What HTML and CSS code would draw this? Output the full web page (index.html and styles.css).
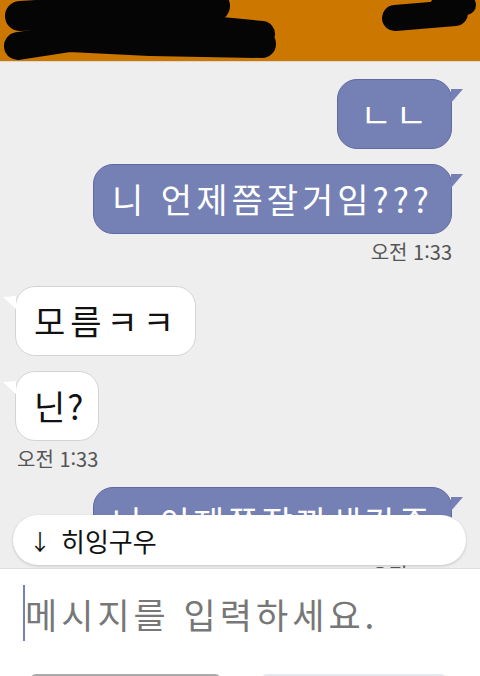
FILE: index.html
```html
<!DOCTYPE html>
<html lang="ko">
<head>
    <meta charset="UTF-8">
    <meta name="viewport" content="width=device-width, initial-scale=1.0">
    <title>채팅</title>
    <link rel="stylesheet" href="styles.css">
</head>
<body>
    <!-- Top bar (name scribbled out) -->
    <header class="top-bar">
        <svg class="scribble" width="480" height="62" viewBox="0 0 480 62">
            <g fill="none" stroke="#050505" stroke-linecap="round" stroke-linejoin="round">
                <path d="M20 16 L120 10 L215 6" stroke-width="30"/>
                <path d="M18 46 L70 38 L150 42 L262 44" stroke-width="28"/>
                <path d="M90 30 L200 28 L262 34" stroke-width="26"/>
                <path d="M395 18 L455 13" stroke-width="26"/>
                <path d="M440 6 L466 5" stroke-width="20"/>
            </g>
        </svg>
    </header>

    <main class="chat">
        <div class="messages">
            <div class="row mine">
                <div class="bubble mine-bubble jamo">ㄴㄴ</div>
            </div>
            <div class="row mine">
                <div class="bubble mine-bubble wide">니 언제쯤잘거임???</div>
            </div>
            <div class="time time-right">오전 1:33</div>

            <div class="row theirs">
                <div class="bubble their-bubble">모름ㅋㅋ</div>
            </div>
            <div class="row theirs">
                <div class="bubble their-bubble short">닌?</div>
            </div>
            <div class="time time-left">오전 1:33</div>

            <div class="row mine">
                <div class="bubble mine-bubble">나 이제쯤잘까생각중</div>
            </div>
            <div class="time time-right">오전 1:33</div>
        </div>

        <!-- new message preview -->
        <div class="preview">
            <span class="arrow">↓</span>
            <span>히잉구우</span>
        </div>
    </main>

    <footer class="composer">
        <div class="input-line">
            <span class="caret"></span>
            <span class="placeholder">메시지를 입력하세요.</span>
        </div>
        <div class="buttons">
            <div class="btn btn-left"></div>
            <div class="btn btn-right"></div>
        </div>
    </footer>
</body>
</html>
```

FILE: styles.css
```css
/* General reset */
* {
    margin: 0;
    padding: 0;
    box-sizing: border-box;
}

body {
    font-family: 'Noto Sans CJK KR', 'Noto Sans', sans-serif;
    background-color: #eeeeee;
    width: 480px;
    height: 676px;
    display: flex;
    flex-direction: column;
    overflow: hidden;
}

/* Header */
.top-bar {
    height: 62px;
    flex-shrink: 0;
    background-color: #cc7800;
    border-bottom: 1px solid #d8d8d8;
}

.scribble {
    display: block;
}

/* Chat area */
.chat {
    position: relative;
    flex: 1;
    overflow: hidden;
}

.messages {
    display: flex;
    flex-direction: column;
    padding: 17px 28px 0 15px;
}

.row {
    display: flex;
    margin-bottom: 15px;
}

.row.mine {
    justify-content: flex-end;
}

.row.theirs {
    justify-content: flex-start;
}

.bubble {
    position: relative;
    height: 70px;
    padding: 0 18px;
    border-radius: 20px;
    font-size: 34px;
    line-height: 68px;
    letter-spacing: 3px;
    white-space: nowrap;
}

.mine-bubble {
    background-color: #7581b5;
    border: 1px solid #5f6aa3;
    color: #ffffff;
}

.mine-bubble::after {
    content: "";
    position: absolute;
    top: 9px;
    right: -12px;
    width: 12px;
    height: 14px;
    background-color: #7581b5;
    clip-path: polygon(0 0, 100% 0, 0 100%);
}

.wide {
    letter-spacing: 4px;
    padding: 0 18px 0 18px;
}

.jamo {
    padding: 0 20px 0 22px;
    letter-spacing: 4px;
}

.their-bubble {
    background-color: #ffffff;
    border: 1px solid #d4d4d4;
    color: #111111;
    padding: 0 16px 0 18px;
    letter-spacing: 5px;
}

.their-bubble.short {
    padding: 0 13px 0 18px;
    letter-spacing: 2px;
}

.their-bubble::after {
    content: "";
    position: absolute;
    top: 9px;
    left: -13px;
    width: 13px;
    height: 13px;
    background-color: #ffffff;
    clip-path: polygon(0 8%, 100% 0, 100% 100%);
}

.time {
    font-size: 20px;
    color: #555555;
    line-height: 24px;
    margin-top: -9px;
    margin-bottom: 22px;
}

.time-right {
    align-self: flex-end;
}

.time-left {
    align-self: flex-start;
    margin-left: 2px;
    margin-bottom: 16px;
}

/* New message preview */
.preview {
    position: absolute;
    left: 13px;
    right: 14px;
    bottom: 3px;
    height: 50px;
    background-color: #ffffff;
    border-radius: 25px;
    box-shadow: 0 1px 3px rgba(0, 0, 0, 0.18);
    display: flex;
    align-items: center;
    gap: 10px;
    padding-left: 16px;
    font-size: 26px;
    color: #111111;
}

.arrow {
    font-size: 22px;
}

/* Composer */
.composer {
    height: 108px;
    flex-shrink: 0;
    background-color: #ffffff;
    border-top: 1px solid #dddddd;
    display: flex;
    flex-direction: column;
    overflow: hidden;
}

.input-line {
    display: flex;
    align-items: center;
    flex-shrink: 0;
    height: 88px;
    padding-left: 23px;
}

.caret {
    width: 2px;
    height: 56px;
    background-color: #7581b5;
}

.placeholder {
    font-size: 35px;
    color: #777777;
    letter-spacing: 4px;
}

.buttons {
    display: flex;
    flex-shrink: 0;
    gap: 40px;
    padding: 17px 33px 0 30px;
}

.btn {
    height: 10px;
    border-radius: 6px 6px 0 0;
}

.btn-left {
    width: 192px;
    border-top: 2px solid #aaaaaa;
}

.btn-right {
    width: 186px;
    border-top: 2px solid #e4e8f0;
}
```
